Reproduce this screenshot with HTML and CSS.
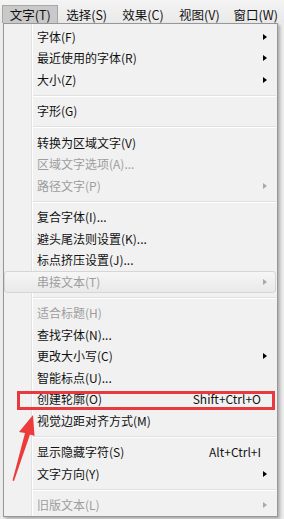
FILE: index.html
```html
<!DOCTYPE html>
<html lang="zh-CN">
<head>
<meta charset="utf-8">
<link rel="stylesheet" href="styles.css">
</head>
<body>
<div class="screen">
  <nav class="menubar">
    <span class="mb-item active">文字(T)</span>
    <span class="mb-item">选择(S)</span>
    <span class="mb-item">效果(C)</span>
    <span class="mb-item">视图(V)</span>
    <span class="mb-item">窗口(W)</span>
  </nav>
  <div class="menu">
    <div class="mi"><span class="lbl">字体(F)</span><span class="sub"></span></div>
    <div class="mi"><span class="lbl">最近使用的字体(R)</span><span class="sub"></span></div>
    <div class="mi"><span class="lbl">大小(Z)</span><span class="sub"></span></div>
    <div class="sep"></div>
    <div class="mi"><span class="lbl">字形(G)</span></div>
    <div class="sep"></div>
    <div class="mi"><span class="lbl">转换为区域文字(V)</span></div>
    <div class="mi dis"><span class="lbl">区域文字选项(A)...</span></div>
    <div class="mi dis"><span class="lbl">路径文字(P)</span><span class="sub"></span></div>
    <div class="sep"></div>
    <div class="mi"><span class="lbl">复合字体(I)...</span></div>
    <div class="mi"><span class="lbl">避头尾法则设置(K)...</span></div>
    <div class="mi"><span class="lbl">标点挤压设置(J)...</span></div>
    <div class="mi dis hover"><span class="lbl">串接文本(T)</span><span class="sub"></span></div>
    <div class="sep"></div>
    <div class="mi dis"><span class="lbl">适合标题(H)</span></div>
    <div class="mi"><span class="lbl">查找字体(N)...</span></div>
    <div class="mi"><span class="lbl">更改大小写(C)</span><span class="sub"></span></div>
    <div class="mi"><span class="lbl">智能标点(U)...</span></div>
    <div class="mi marked"><span class="lbl">创建轮廓(O)</span><span class="key">Shift+Ctrl+O</span></div>
    <div class="mi"><span class="lbl">视觉边距对齐方式(M)</span></div>
    <div class="sep"></div>
    <div class="mi"><span class="lbl">显示隐藏字符(S)</span><span class="key">Alt+Ctrl+I</span></div>
    <div class="mi"><span class="lbl">文字方向(Y)</span><span class="sub"></span></div>
    <div class="sep"></div>
    <div class="mi dis"><span class="lbl">旧版文本(L)</span><span class="sub"></span></div>
  </div>
  <svg class="arrow" viewBox="8 408 32 80" width="32" height="80">
    <polygon points="33,415 34.5,436 30,434.5 14,481 12.5,480.5 25,433 19,432" fill="#ec3b3b"/>
  </svg>
</div>
</body>
</html>
```

FILE: styles.css
```css
* { box-sizing: border-box; }
html, body { margin: 0; padding: 0; }
body {
  width: 284px;
  height: 519px;
  overflow: hidden;
  background: #f0f0f0;
  font-family: "Noto Sans CJK SC", "Noto Sans", sans-serif;
  color: #000;
}
.screen {
  position: relative;
  width: 284px;
  height: 519px;
  background: #ececec;
}
.menubar {
  display: flex;
  align-items: flex-end;
  height: 23px;
  padding-left: 2px;
  background: linear-gradient(#f4f4f4, #e9e9e9);
  font-size: 12.5px;
  color: #111;
}
.mb-item {
  display: flex;
  align-items: center;
  justify-content: center;
  width: 57.6px;
  height: 18px;
  border: 1px solid transparent;
  border-bottom: 0;
  line-height: 1;
  padding-top: 2px;
  white-space: nowrap;
}
.mb-item.active {
  background: #c9c9c9;
  border-color: #a8a8a8;
}
.menu {
  width: 275px;
  margin-left: 3px;
  border: 1px solid #979797;
  padding: 2px 0 0 0;
  background:
    linear-gradient(to right, transparent 27px, #e2e2e2 27px, #e2e2e2 28px, #ffffff 28px, #ffffff 29px, transparent 29px),
    #f1f1f1;
  box-shadow: 2px 2px 3px rgba(0, 0, 0, 0.28);
  font-size: 12px;
}
.mi {
  position: relative;
  display: flex;
  align-items: center;
  height: 21.5px;
  margin-right: 1px;
  padding: 0 8px 0 32px;
  border: 1px solid transparent;
  line-height: 1;
  color: #111;
}
.lbl { flex: 1; white-space: nowrap; }
.key { margin-right: 6px; white-space: nowrap; }
.sub {
  width: 0;
  height: 0;
  border-left: 4px solid #000;
  border-top: 3.5px solid transparent;
  border-bottom: 3.5px solid transparent;
}
.mi.dis { color: #9d9d9d; }
.mi.dis .sub { border-left-color: #a8a8a8; }
.mi.hover {
  border-color: #d6d6d6;
  border-radius: 3px;
  background: linear-gradient(#f6f6f6, #e9e9e9);
}
.mi.marked::after {
  content: "";
  position: absolute;
  left: 12px;
  right: 0;
  top: 1px;
  bottom: -1px;
  border: 3px solid #e83a3e;
}
.sep {
  height: 10px;
  margin-left: 29px;
  margin-right: 1px;
  background: linear-gradient(transparent 4px, #e0e0e0 4px, #e0e0e0 5px, #ffffff 5px, #ffffff 6px, transparent 6px);
}
.arrow {
  position: absolute;
  left: 8px;
  top: 408px;
}
```
